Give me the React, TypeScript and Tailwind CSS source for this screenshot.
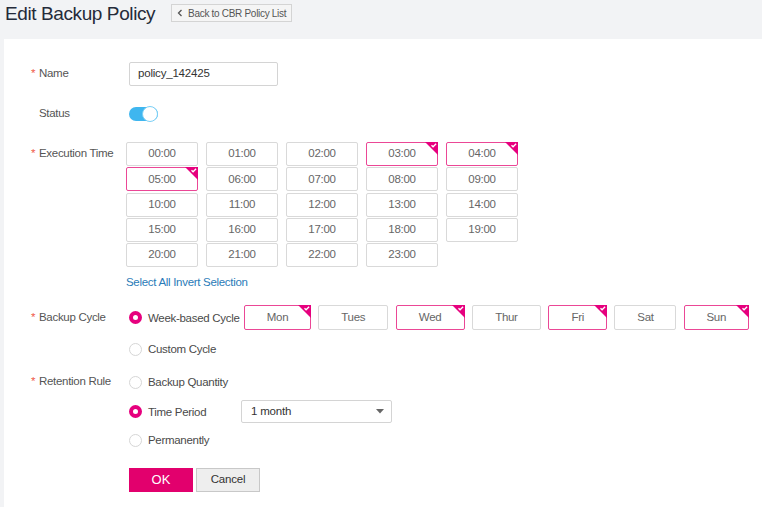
import type { ReactNode } from "react";

const PINK = "#e6007e";

const times = [
  "00:00", "01:00", "02:00", "03:00", "04:00",
  "05:00", "06:00", "07:00", "08:00", "09:00",
  "10:00", "11:00", "12:00", "13:00", "14:00",
  "15:00", "16:00", "17:00", "18:00", "19:00",
  "20:00", "21:00", "22:00", "23:00",
];
const pickedTimes = ["03:00", "04:00", "05:00"];

const days = [
  { name: "Mon", w: "w-[67px]", on: true },
  { name: "Tues", w: "w-[70px]", on: false },
  { name: "Wed", w: "w-[69px]", on: true },
  { name: "Thur", w: "w-[69px]", on: false },
  { name: "Fri", w: "w-[59px]", on: true },
  { name: "Sat", w: "w-[62px]", on: false },
  { name: "Sun", w: "w-[65px]", on: true },
];

function Corner() {
  return (
    <svg className="absolute -top-px -right-px" width="13" height="13" viewBox="0 0 13 13">
      <path d="M0 0H13V13Z" fill={PINK} />
      <path d="M6.5 3.2l1.6 1.6 3-3" fill="none" stroke="#fff" strokeWidth="1.3" />
    </svg>
  );
}

function Chip({ label, on, className }: { label: string; on: boolean; className: string }) {
  return (
    <div
      className={`relative flex items-center justify-center rounded-[2px] border text-[11.5px] tracking-[-0.3px] text-[#666] ${
        on ? "border-[#eb4796]" : "border-[#d9d9d9]"
      } ${className}`}
    >
      {label}
      {on && <Corner />}
    </div>
  );
}

function Radio({ checked, label }: { checked?: boolean; label: string }) {
  return (
    <div className="flex items-center h-[14px] whitespace-nowrap">
      <span
        className={`w-[13px] h-[13px] rounded-full box-border ${
          checked ? "border-[4px] border-[#e6007e] bg-white" : "border border-[#d6d6d6] bg-white"
        }`}
      />
      <span className="ml-[6px] text-[11.5px] tracking-[-0.3px] leading-[14px] text-[#4a4a4a]">{label}</span>
    </div>
  );
}

function Row({ label, required, children, className = "", labelH }: { label: string; required?: boolean; children: ReactNode; className?: string; labelH: string }) {
  return (
    <div className={`flex items-start ${className}`}>
      <div className={`w-[95px] shrink-0 flex items-center text-[11.5px] tracking-[-0.3px] text-[#555] ${labelH}`}>
        <span className="w-[8px] text-[#f05a4a]">{required ? "*" : ""}</span>
        <span>{label}</span>
      </div>
      <div className="flex-1">{children}</div>
    </div>
  );
}

export default function App() {
  return (
    <div className="w-[762px] h-[507px] bg-[#f2f3f5] overflow-hidden font-['Liberation_Sans',Arial,sans-serif]">
      <div className="h-[39px] flex items-start">
        <h1 className="ml-[5px] mt-[1px] text-[19px] tracking-[-0.4px] leading-[26px] text-[#252b3a] whitespace-nowrap">
          Edit Backup Policy
        </h1>
        <button
          type="button"
          className="ml-[16px] mt-[4px] h-[18px] w-[121px] flex items-center justify-center gap-[5px] border border-[#d4d4d4] bg-[#f5f5f5] text-[10px] tracking-[-0.3px] text-[#555] whitespace-nowrap"
        >
          <svg width="6" height="8" viewBox="0 0 6 8">
            <path d="M4.5 1L1.5 4l3 3" fill="none" stroke="#555" strokeWidth="1.3" />
          </svg>
          Back to CBR Policy List
        </button>
      </div>

      <div className="ml-[4px] h-[468px] bg-white pl-[27px] pt-[23px]">
        <Row label="Name" required labelH="h-[24px]">
          <div className="ml-[3px] w-[149px] h-[24px] border border-[#d4d4d4] rounded-[2px] flex items-center pl-[8px] text-[11.5px] tracking-[-0.2px] text-[#333]">
            policy_142425
          </div>
        </Row>

        <Row label="Status" labelH="h-[14px]" className="mt-[21px]">
          <div className="ml-[3px] relative w-[29px] h-[14px]">
            <div className="absolute inset-0 rounded-full bg-[#3fb6ef]" />
            <div className="absolute right-0 -top-px w-[16px] h-[16px] rounded-full bg-white border border-[#7cd0f6]" />
          </div>
        </Row>

        <Row label="Execution Time" required labelH="h-[23px]" className="mt-[21px]">
          <div className="grid grid-cols-[repeat(5,72px)] gap-x-[8px] gap-y-[1.25px]">
            {times.map((t) => (
              <Chip key={t} label={t} on={pickedTimes.includes(t)} className="h-[24px]" />
            ))}
          </div>
          <div className="mt-[9px] text-[11.5px] tracking-[-0.3px] leading-[12px] text-[#2a7bb8]">
            Select All Invert Selection
          </div>
        </Row>

        <Row label="Backup Cycle" required labelH="h-[25px]" className="mt-[17px]">
          <div className="ml-[3px]">
            <div className="flex items-center h-[25px]">
              <div className="w-[115px]">
                <Radio checked label="Week-based Cycle" />
              </div>
              <div className="flex gap-[7.3px]">
                {days.map((d) => (
                  <Chip key={d.name} label={d.name} on={d.on} className={`h-[25px] ${d.w}`} />
                ))}
              </div>
            </div>
            <div className="mt-[12px]">
              <Radio label="Custom Cycle" />
            </div>
          </div>
        </Row>

        <Row label="Retention Rule" required labelH="h-[14px]" className="mt-[19px]">
          <div className="ml-[3px]">
            <Radio label="Backup Quantity" />
            <div className="mt-[11px] flex items-center">
              <div className="w-[112px]">
                <Radio checked label="Time Period" />
              </div>
              <div className="w-[151px] h-[23px] border border-[#d4d4d4] rounded-[2px] flex items-center justify-between pl-[9px] pr-[7px] text-[11.5px] tracking-[-0.2px] text-[#333]">
                1 month
                <svg width="8" height="5" viewBox="0 0 8 5">
                  <path d="M0 0h8L4 4.5z" fill="#666" />
                </svg>
              </div>
            </div>
            <div className="mt-[10px]">
              <Radio label="Permanently" />
            </div>
            <div className="mt-[21px] flex gap-[3px]">
              <button type="button" className="w-[64px] h-[24px] bg-[#e2006d] text-white text-[13px]">
                OK
              </button>
              <button
                type="button"
                className="w-[64px] h-[24px] bg-[#eeeeee] border border-[#c8c8c8] text-[11.5px] tracking-[-0.2px] text-[#333]"
              >
                Cancel
              </button>
            </div>
          </div>
        </Row>
      </div>
    </div>
  );
}
